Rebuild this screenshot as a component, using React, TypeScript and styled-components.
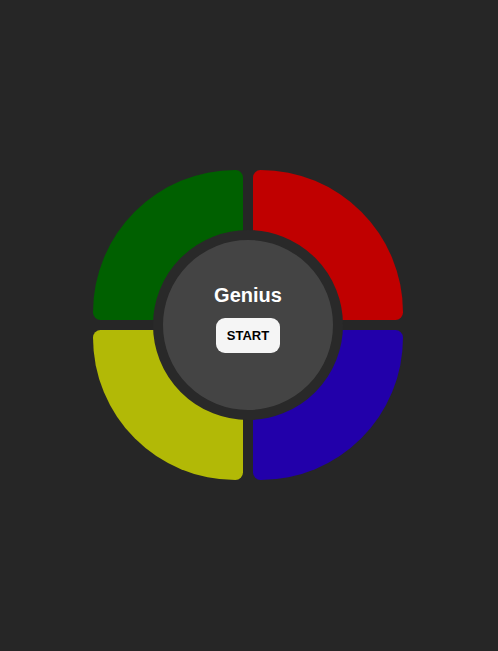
import React from "react";
import styled, { createGlobalStyle } from "styled-components";

const Global = createGlobalStyle`
  html, body { margin: 0; padding: 0; background: #262626; }
  body { font-family: "Liberation Sans", Arial, sans-serif; }
`;

const Page = styled.div`
  width: 100vw;
  height: 100vh;
  display: flex;
  align-items: center;
  justify-content: center;
  background: #262626;
  padding-right: 2px;
  padding-bottom: 1px;
  box-sizing: border-box;
`;

const Board = styled.div`
  position: relative;
  display: grid;
  grid-template-columns: 150px 150px;
  grid-template-rows: 150px 150px;
  gap: 10px;
`;

type Corner = "tl" | "tr" | "bl" | "br";

const radius: Record<Corner, string> = {
  tl: "150px 8px 8px 8px",
  tr: "8px 150px 8px 8px",
  bl: "8px 8px 8px 150px",
  br: "8px 8px 150px 8px",
};

const Pad = styled.button<{ $color: string; $corner: Corner }>`
  border: none;
  padding: 0;
  background: ${(p) => p.$color};
  border-radius: ${(p) => radius[p.$corner]};
  cursor: pointer;
`;

const Center = styled.div`
  position: absolute;
  left: 50%;
  top: 50%;
  box-sizing: border-box;
  width: 190px;
  height: 190px;
  transform: translate(-50%, -50%);
  border-radius: 50%;
  background: #444444;
  border: 10px solid #292929;
  padding-bottom: 13px;
  display: flex;
  flex-direction: column;
  align-items: center;
  justify-content: center;
  gap: 11px;
`;

const Title = styled.h1`
  margin: 0;
  color: #ffffff;
  font-size: 20px;
  font-weight: bold;
  line-height: 23px;
`;

const Start = styled.button`
  border: none;
  background: #f5f5f5;
  color: #000;
  font-family: "Liberation Sans", Arial, sans-serif;
  font-weight: bold;
  font-size: 13px;
  width: 64px;
  height: 35px;
  border-radius: 9px;
  cursor: pointer;
`;

export default function App() {
  return (
    <>
      <Global />
      <Page>
        <Board>
          <Pad $color="#006000" $corner="tl" />
          <Pad $color="#c00000" $corner="tr" />
          <Pad $color="#b2b906" $corner="bl" />
          <Pad $color="#2200aa" $corner="br" />
          <Center>
            <Title>Genius</Title>
            <Start>START</Start>
          </Center>
        </Board>
      </Page>
    </>
  );
}
